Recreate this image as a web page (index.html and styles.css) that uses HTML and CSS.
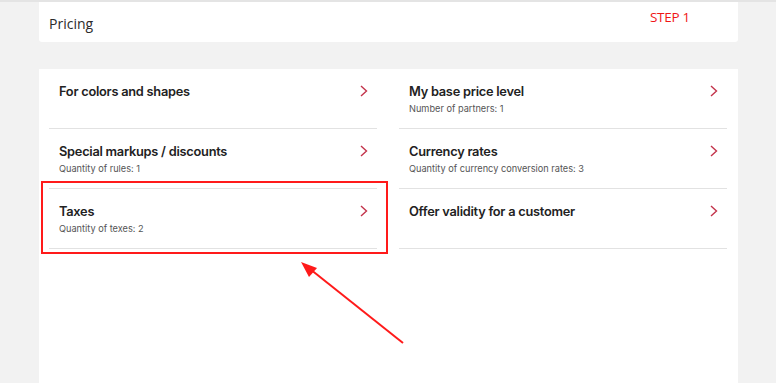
FILE: index.html
```html
<!DOCTYPE html>
<html lang="en">
<head>
<meta charset="utf-8">
<title>Pricing</title>
<link rel="stylesheet" href="styles.css">
</head>
<body>
<div class="page">
  <header class="head-card">
    <h1 class="head-title">Pricing</h1>
    <span class="step">STEP 1</span>
  </header>
  <main class="main-card">
    <div class="col">
      <a class="row" href="#">
        <div class="row-text"><div class="row-title">For colors and shapes</div></div>
        <svg class="chev" viewBox="0 0 8 12" width="8" height="12"><polyline points="1,1 6.5,6 1,11"/></svg>
      </a>
      <a class="row" href="#">
        <div class="row-text"><div class="row-title">Special markups / discounts</div><div class="row-sub">Quantity of rules: 1</div></div>
        <svg class="chev" viewBox="0 0 8 12" width="8" height="12"><polyline points="1,1 6.5,6 1,11"/></svg>
      </a>
      <a class="row" href="#">
        <div class="row-text"><div class="row-title">Taxes</div><div class="row-sub">Quantity of texes: 2</div></div>
        <svg class="chev" viewBox="0 0 8 12" width="8" height="12"><polyline points="1,1 6.5,6 1,11"/></svg>
      </a>
    </div>
    <div class="col">
      <a class="row" href="#">
        <div class="row-text"><div class="row-title">My base price level</div><div class="row-sub">Number of partners: 1</div></div>
        <svg class="chev" viewBox="0 0 8 12" width="8" height="12"><polyline points="1,1 6.5,6 1,11"/></svg>
      </a>
      <a class="row" href="#">
        <div class="row-text"><div class="row-title">Currency rates</div><div class="row-sub">Quantity of currency conversion rates: 3</div></div>
        <svg class="chev" viewBox="0 0 8 12" width="8" height="12"><polyline points="1,1 6.5,6 1,11"/></svg>
      </a>
      <a class="row" href="#">
        <div class="row-text"><div class="row-title">Offer validity for a customer</div></div>
        <svg class="chev" viewBox="0 0 8 12" width="8" height="12"><polyline points="1,1 6.5,6 1,11"/></svg>
      </a>
    </div>
  </main>
</div>
<svg class="annot" width="776" height="383" viewBox="0 0 776 383">
  <rect x="42" y="182" width="345" height="71" fill="none" stroke="#ff1a1a" stroke-width="2"/>
  <line x1="403" y1="343" x2="310" y2="269" stroke="#ff1a1a" stroke-width="2"/>
  <polygon points="301,262 317,268 309,277" fill="#ff1a1a"/>
</svg>
</body>
</html>
```
FILE: styles.css
```css
html, body {
  margin: 0;
  padding: 0;
}
body {
  background: #f2f2f2;
  border-top: 2px solid #e4e4e4;
  font-family: Inter, "Noto Sans", sans-serif;
  height: 381px;
  overflow: hidden;
  position: relative;
}
.page {
  padding: 0 38px 0 39px;
}
.head-card {
  position: relative;
  background: #fff;
  height: 40px;
  border-radius: 0 0 3px 3px;
  display: flex;
  align-items: center;
  padding-left: 10px;
}
.head-title {
  margin: 0;
  font-family: "Open Sans", sans-serif;
  font-weight: 400;
  font-size: 14px;
  color: #2b2b2b;
  padding-top: 2px;
}
.step {
  position: absolute;
  left: 611px;
  top: 6px;
  font-family: "Open Sans", sans-serif;
  font-size: 13.5px;
  font-weight: 500;
  color: #f01616;
  letter-spacing: -0.3px;
}
.main-card {
  margin-top: 27px;
  background: #fff;
  min-height: 330px;
  padding: 0 11px 0 10px;
  display: grid;
  grid-template-columns: 1fr 1fr;
  column-gap: 22px;
  align-content: start;
}
.row {
  display: flex;
  justify-content: space-between;
  align-items: flex-start;
  border-bottom: 1px solid #e2e2e2;
  padding: 15px 9px 0 10px;
  box-sizing: border-box;
  height: 60px;
  text-decoration: none;
}
.row-title {
  font-size: 12.8px;
  font-weight: 600;
  letter-spacing: -0.25px;
  color: #222;
  line-height: 16px;
}
.row-sub {
  font-size: 9.2px;
  color: #555;
  margin-top: 3px;
  line-height: 12px;
}
.chev {
  margin-top: 1px;
  fill: none;
  stroke: #c3334b;
  stroke-width: 1.4;
}
.annot {
  position: absolute;
  left: 0;
  top: -2px;
  pointer-events: none;
}
```
